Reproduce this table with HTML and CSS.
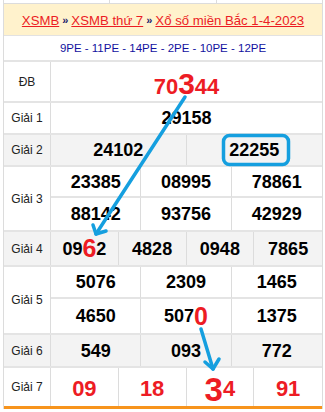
FILE: index.html
```html
<!DOCTYPE html>
<html lang="vi">
<head>
<meta charset="utf-8">
<title>XSMB 1-4-2023</title>
<link rel="stylesheet" href="styles.css">
</head>
<body>
<div class="page">
  <div class="prev"><span></span><span></span><span></span></div>
  <div class="title">
    <a href="#">XSMB</a><span class="sep">»</span><a href="#">XSMB thứ 7</a><span class="sep">»</span><a href="#">Xổ số miền Bắc 1-4-2023</a>
  </div>
  <div class="codes">9PE - 11PE - 14PE - 2PE - 10PE - 12PE</div>

  <div class="row h-db">
    <div class="lbl">ĐB</div>
    <div class="nums c1"><div class="cell"><span class="db">70<span class="big-db">3</span>44</span></div></div>
  </div>
  <div class="row h-1">
    <div class="lbl">Giải 1</div>
    <div class="nums c1"><div class="cell">29158</div></div>
  </div>
  <div class="row h-1 alt">
    <div class="lbl">Giải 2</div>
    <div class="nums c2"><div class="cell">24102</div><div class="cell">22255</div></div>
  </div>
  <div class="row">
    <div class="lbl">Giải 3</div>
    <div class="nums c3 two">
      <div class="cell">23385</div><div class="cell">08995</div><div class="cell">78861</div>
      <div class="cell">88142</div><div class="cell">93756</div><div class="cell">42929</div>
    </div>
  </div>
  <div class="row h-4 alt">
    <div class="lbl">Giải 4</div>
    <div class="nums c4">
      <div class="cell">09<span class="hot">6</span>2</div><div class="cell">4828</div><div class="cell">0948</div><div class="cell">7865</div>
    </div>
  </div>
  <div class="row">
    <div class="lbl">Giải 5</div>
    <div class="nums c3 two five">
      <div class="cell">5076</div><div class="cell">2309</div><div class="cell">1465</div>
      <div class="cell">4650</div><div class="cell">507<span class="hot">0</span></div><div class="cell">1375</div>
    </div>
  </div>
  <div class="row h-6 alt">
    <div class="lbl">Giải 6</div>
    <div class="nums c3"><div class="cell">549</div><div class="cell">093</div><div class="cell">772</div></div>
  </div>
  <div class="row h-db last">
    <div class="lbl">Giải 7</div>
    <div class="nums c4 red">
      <div class="cell">09</div><div class="cell">18</div><div class="cell"><span class="big7">3</span>4</div><div class="cell">91</div>
    </div>
  </div>

  <svg class="marks" width="325" height="412" viewBox="0 0 325 412">
    <g fill="none" stroke="#159fdf" stroke-width="3.5" stroke-linecap="round" stroke-linejoin="round">
      <rect x="223.5" y="135.5" width="65" height="29" rx="6" ry="6"/>
      <line x1="185" y1="97" x2="96" y2="234"/>
      <polyline points="93,225 96,234 106,231"/>
      <line x1="201" y1="329" x2="213" y2="369"/>
      <polyline points="205,362 213,369 219,359"/>
    </g>
  </svg>
</div>
</body>
</html>
```
FILE: styles.css
```css
* { box-sizing: border-box; }
html, body { margin: 0; padding: 0; background: #fff; }
body {
  font-family: "Liberation Sans", Arial, sans-serif;
  width: 325px;
  height: 412px;
  overflow: hidden;
}
.page {
  position: relative;
  margin-left: 3px;
  width: 320px;
  border-left: 1px solid #dcdcdc;
  border-right: 1px solid #dcdcdc;
}
.prev {
  display: grid;
  grid-template-columns: 106px 107px 1fr;
  height: 4px;
  border-bottom: 1px solid #dcdcdc;
}
.prev span { border-right: 1px solid #dcdcdc; }
.prev span:last-child { border-right: 0; }

.title {
  height: 32px;
  background: #fff2cc;
  border-bottom: 1px solid #e2e2e2;
  display: flex;
  align-items: center;
  justify-content: center;
  font-size: 13.2px;
  white-space: nowrap;
  padding-top: 1px;
}
.title a { color: #ec1c24; text-decoration: underline; }
.title .sep { color: #1b1b6b; font-size: 11px; font-weight: bold; margin: 0 3px; }

.codes {
  height: 26px;
  border-bottom: 2px solid #e4e4e4;
  display: flex;
  align-items: center;
  justify-content: center;
  font-size: 11.5px;
  color: #1212a0;
  white-space: nowrap;
}

.row {
  display: flex;
  border-bottom: 2px solid #e4e4e4;
}
.row.alt { background: #f3f3f3; }
.row.h-db { height: 41px; }
.row.h-1 { height: 32px; }
.row.h-4 { height: 35px; }
.row.h-6 { height: 33px; }
.row.last { border-bottom: 3px solid #f7941d; }

.lbl {
  width: 47px;
  flex: none;
  border-right: 1px solid #dcdcdc;
  display: flex;
  align-items: center;
  justify-content: center;
  font-size: 12px;
  color: #222;
}

.nums {
  flex: 1;
  display: grid;
  font-size: 18px;
  font-weight: bold;
  color: #000;
}
.c1 { grid-template-columns: 1fr; }
.c2 { grid-template-columns: 1fr 1fr; }
.c3 { grid-template-columns: 1fr 1fr 1fr; }
.c4 { grid-template-columns: 1fr 1fr 1fr 1fr; }
.two { grid-template-rows: 31px 32px; }
.two.five { grid-template-rows: 32px 34px; }

.cell {
  display: flex;
  align-items: center;
  justify-content: center;
  border-right: 1px solid #dcdcdc;
  line-height: 1;
  white-space: nowrap;
}
.c1 .cell:nth-child(1n),
.c2 .cell:nth-child(2n),
.c3 .cell:nth-child(3n),
.c4 .cell:nth-child(4n) { border-right: 0; }
.two .cell:nth-child(-n+3) { border-bottom: 2px solid #e4e4e4; }

.db { color: #ed1c24; font-size: 22px; padding-top: 4px; }
.big-db { font-size: 30px; }
.hot { color: #ed1c24; font-size: 25px; }
.red { color: #ed1c24; font-size: 22px; }
.red .cell { padding-top: 4px; }
.big7 { font-size: 33px; }

.marks {
  position: absolute;
  left: -4px;
  top: 0;
  pointer-events: none;
}
```
